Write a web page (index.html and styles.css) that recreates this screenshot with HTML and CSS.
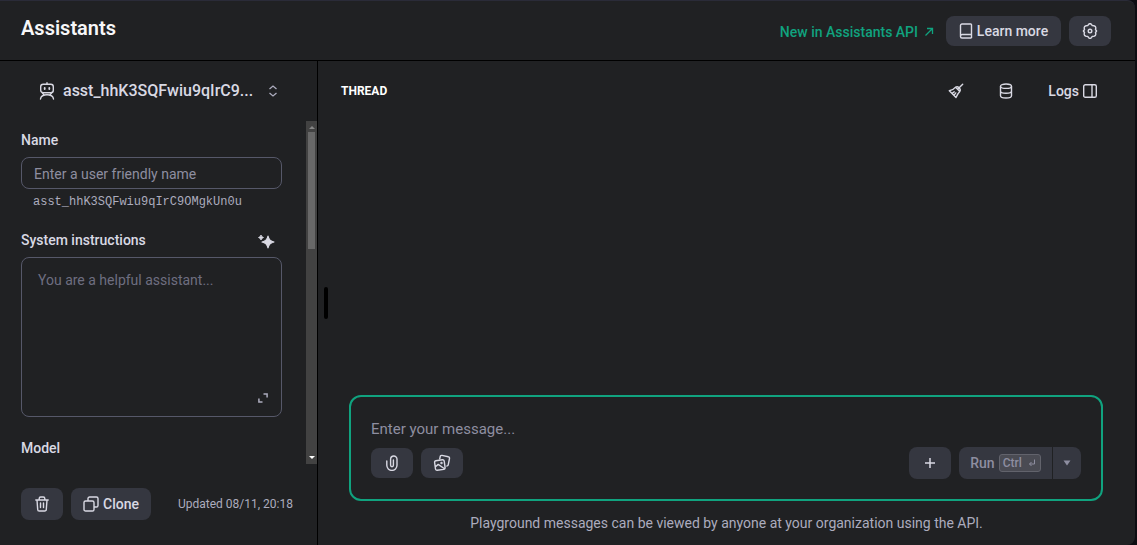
FILE: index.html
```
<!DOCTYPE html>
<html lang="en">
<head>
    <meta charset="UTF-8">
    <meta name="viewport" content="width=device-width, initial-scale=1.0">
    <title>Assistants - Playground</title>
    <link rel="stylesheet" href="styles.css">
</head>
<body>
    <div class="app">
        <header class="header">
            <h1>Assistants</h1>
            <div class="header-actions">
                <a href="#" class="news-link">New in Assistants API
                    <svg width="10" height="10" viewBox="0 0 10 10" fill="none" stroke="currentColor" stroke-width="1.3"><path d="M1.5 8.5 8.5 1.5M3 1.5h5.500v5.500"/></svg>
                </a>
                <button type="button" class="btn btn-learn">
                    <svg width="14" height="16" viewBox="0 0 14 16" fill="none" stroke="currentColor" stroke-width="1.4" stroke-linejoin="round"><path d="M12.5 11.5V1.8a.8.8 0 0 0-.8-.8H3a1.5 1.5 0 0 0-1.5 1.5v11A1.5 1.5 0 0 0 3 15h9.5M1.5 13.2A1.7 1.7 0 0 1 3.2 11.5h9.3V15"/></svg>
                    Learn more
                </button>
                <button type="button" class="btn btn-icon" aria-label="Settings">
                    <svg width="16" height="16" viewBox="0 0 16 16" fill="none" stroke="currentColor" stroke-width="1.4" stroke-linejoin="round"><path d="M6.7 1.3Q8 0 9.3 1.3L10.3 2.6 12 2.8Q14 3.2 13.8 5.1L13.5 6.5 14.6 8 13.5 9.5 13.8 10.9Q14 12.8 12 13.2L10.300 13.4 9.3 14.7Q8 16 6.7 14.7L5.7 13.4 4 13.2Q2 12.8 2.2 10.9L2.5 9.5 1.4 8 2.5 6.5 2.2 5.100Q2 3.2 4 2.8L5.7 2.6Z"/><circle cx="8" cy="8" r="1.8"/></svg>
                </button>
            </div>
        </header>

        <div class="content">
            <aside class="sidebar">
                <button type="button" class="assistant-select">
                    <svg width="16" height="18" viewBox="0 0 16 18" fill="none" stroke="currentColor" stroke-width="1.4" stroke-linecap="round"><rect x="1.7" y="2.2" width="12.6" height="8.6" rx="2.5"/><path d="M8 .8v1.4M1.5 17c.3-2.6 2.7-4.200 6.500-4.200s6.200 1.600 6.500 4.200M3.500 11l1.800 2.200M12.500 11l-1.800 2.200"/><path d="M5.700 6v1M10.300 6v1" stroke-width="1.800"/></svg>
                    <span class="assistant-name">asst_hhK3SQFwiu9qIrC9...</span>
                    <svg class="chevrons" width="10" height="12" viewBox="0 0 10 12" fill="none" stroke="currentColor" stroke-width="1.3"><path d="M1.5 4 5 1l3.5 3M1.5 8 5 11l3.5-3"/></svg>
                </button>

                <div class="sidebar-scroll">
                    <form class="settings">
                        <label for="name">Name</label>
                        <input type="text" id="name" placeholder="Enter a user friendly name">
                        <div class="assistant-id">asst_hhK3SQFwiu9qIrC9OMgkUn0u</div>

                        <div class="label-row">
                            <label for="instructions">System instructions</label>
                            <button type="button" class="btn-plain" aria-label="Generate">
                                <svg width="18" height="18" viewBox="0 0 18 18" fill="currentColor"><path d="M11 5Q12 10 17 11 12 12 11 17 10 12 5 11 10 10 11 5Z" stroke="currentColor" stroke-width="1.2" stroke-linejoin="round"/><path d="M4 4Q4.500 6 6.500 6.500 4.500 7 4 9 3.500 7 1.500 6.500 3.500 6 4 4Z" stroke="currentColor" stroke-width=".8"/></svg>
                            </button>
                        </div>
                        <div class="instructions-box">
                            <textarea id="instructions" placeholder="You are a helpful assistant..."></textarea>
                            <button type="button" class="btn-plain btn-expand" aria-label="Expand">
                                <svg width="10" height="10" viewBox="0 0 10 10" fill="none" stroke="currentColor" stroke-width="1.5"><path d="M5.5 .9h3.6v3.6M.9 5.5v3.6h3.6"/></svg>
                            </button>
                        </div>

                        <h2>Model</h2>
                    </form>
                    <div class="scrollbar">
                        <span class="arrow-up"></span>
                        <span class="thumb"></span>
                        <span class="arrow-down"></span>
                    </div>
                </div>

                <div class="sidebar-footer">
                    <button type="button" class="btn btn-icon" aria-label="Delete">
                        <svg width="16" height="16" viewBox="0 0 16 16" fill="none" stroke="currentColor" stroke-width="1.4" stroke-linecap="round" stroke-linejoin="round"><path d="M1.8 4h12.4M5.2 4V2.5A1.5 1.5 0 0 1 6.7 1h2.6a1.5 1.5 0 0 1 1.5 1.5V4M3 4l.7 9.4A1.6 1.6 0 0 0 5.3 15h5.4a1.6 1.6 0 0 0 1.6-1.6L13 4M6.5 7v4.5M9.5 7v4.5"/></svg>
                    </button>
                    <button type="button" class="btn btn-clone">
                        <svg width="16" height="16" viewBox="0 0 16 16" fill="none" stroke="currentColor" stroke-width="1.4" stroke-linejoin="round"><rect x="1" y="5" width="10" height="10" rx="1.6"/><path d="M5 5V2.6A1.6 1.6 0 0 1 6.6 1h6.8A1.6 1.6 0 0 1 15 2.6v6.8a1.6 1.6 0 0 1-1.6 1.6H11"/></svg>
                        Clone
                    </button>
                    <span class="updated">Updated 08/11, 20:18</span>
                </div>
            </aside>

            <main class="thread">
                <div class="drag-handle"></div>
                <div class="thread-header">
                    <h2>THREAD</h2>
                    <div class="thread-actions">
                        <button type="button" class="btn-plain" aria-label="Clear thread">
                            <svg width="16" height="16" viewBox="0 0 16 16" fill="none" stroke="currentColor" stroke-width="1.4" stroke-linecap="round" stroke-linejoin="round"><path d="M14.7 1.3 10.4 5.6M7.6 4.2 11.8 8.4M7.6 4.2C6 6.3 4 7.3 1.3 7.7L8 14.4C8.8 12.5 9.8 10.4 11.8 8.4Q13 6.6 11.2 4.9 9.4 3 7.6 4.2ZM4 10.3l2.2-1.500M6 12.300l1.800-2.400"/></svg>
                        </button>
                        <button type="button" class="btn-plain" aria-label="Storage">
                            <svg width="14" height="16" viewBox="0 0 14 16" fill="none" stroke="currentColor" stroke-width="1.4"><ellipse cx="7" cy="3.2" rx="5.5" ry="2.2"/><path d="M1.5 3.2v9.6C1.5 14 4 15 7 15s5.500-1 5.500-2.200V3.200M1.500 8c0 1.200 2.500 2.200 5.500 2.200s5.500-1 5.500-2.200"/></svg>
                        </button>
                        <button type="button" class="btn-plain">
                            Logs
                            <svg width="14" height="14" viewBox="0 0 14 14" fill="none" stroke="currentColor" stroke-width="1.4"><rect x=".7" y=".7" width="12.6" height="12.6" rx="1.6"/><path d="M9 1v12"/></svg>
                        </button>
                    </div>
                </div>

                <div class="composer">
                    <textarea rows="1" aria-label="Message" placeholder="Enter your message..."></textarea>
                    <div class="composer-actions">
                        <button type="button" class="btn btn-icon" aria-label="Attach file">
                            <svg width="14" height="16" viewBox="0 0 14 16" fill="none" stroke="currentColor" stroke-width="1.4" stroke-linecap="round"><path d="M1.8 6v4.300a5.100 5.100 0 0 0 10.200 0V4.200a3.200 3.200 0 0 0-6.400 0v6.100a1.400 1.400 0 0 0 2.800 0V5"/></svg>
                        </button>
                        <button type="button" class="btn btn-icon" aria-label="Attach image">
                            <svg width="18" height="18" viewBox="0 0 18 18" fill="none" stroke="currentColor" stroke-width="1.4" stroke-linejoin="round"><path d="M2.900 6.700l6.600-.9a1.500 1.500 0 0 1 1.700 1.300l.9 6.600a1.500 1.500 0 0 1-1.300 1.700l-6.600.9a1.500 1.500 0 0 1-1.700-1.300L1.600 8.400a1.500 1.500 0 0 1 1.300-1.700ZM2.200 13l3-2.600 6.300 4.400"/><circle cx="8.500" cy="9" r=".5"/><path d="M6.600 5.500 7.200 2.600a1.500 1.500 0 0 1 1.800-1.200l6.300 1.300a1.500 1.500 0 0 1 1.200 1.800l-1.300 6.300a1.500 1.500 0 0 1-1.800 1.200"/></svg>
                        </button>
                        <div class="run-actions">
                            <button type="button" class="btn btn-icon" aria-label="Add message">
                                <svg width="12" height="12" viewBox="0 0 12 12" fill="none" stroke="currentColor" stroke-width="1.5"><path d="M6 1v10M1 6h10"/></svg>
                            </button>
                            <div class="run-group">
                                <button type="button" class="btn btn-run">Run <kbd>Ctrl
                                    <svg width="8" height="8" viewBox="0 0 8 8" fill="none" stroke="currentColor"><path d="M6.5 .5v4.5H1.5M3.5 3l-2 2 2 2"/></svg></kbd></button>
                                <button type="button" class="btn btn-run-menu" aria-label="Run options">
                                    <svg width="8" height="6" viewBox="0 0 8 6" fill="currentColor"><path d="M.5 .5h7L4 5.5Z"/></svg>
                                </button>
                            </div>
                        </div>
                    </div>
                </div>
                <p class="notice">Playground messages can be viewed by anyone at your organization using the API.</p>
            </main>
        </div>
    </div>
</body>
</html>
```
FILE: styles.css
```
* {
    box-sizing: border-box;
}
body {
    margin: 0;
    background-color: #0d0d12;
    color: #d9d9e3;
    font-family: Roboto, "Liberation Sans", sans-serif;
    font-size: 14px;
    line-height: 20px;
}
button,
input,
textarea {
    font: inherit;
    color: inherit;
    margin: 0;
}
button {
    cursor: pointer;
}
svg {
    display: block;
    flex: none;
}
.app {
    display: flex;
    flex-direction: column;
    height: 100vh;
    margin-right: 2px;
    background-color: #202123;
    border-top: 1px solid #2a2b38;
    border-radius: 0 8px 8px 0;
    overflow: hidden;
}
.header {
    display: flex;
    align-items: center;
    justify-content: space-between;
    height: 60px;
    flex: none;
    padding: 0 24px 0 21px;
    border-bottom: 1px solid #000;
}
h1 {
    margin: 0 0 6px;
    font-size: 20px;
    font-weight: 600;
    line-height: 28px;
    color: #f7f7f8;
}
.header-actions {
    display: flex;
    align-items: center;
    gap: 8px;
}
.news-link {
    display: flex;
    align-items: center;
    gap: 6px;
    margin-right: 4px;
    padding-top: 2px;
    color: #10a37f;
    font-weight: 500;
    text-decoration: none;
}
.btn {
    display: flex;
    align-items: center;
    justify-content: center;
    gap: 4px;
    height: 32px;
    padding: 0 12px;
    border: none;
    border-radius: 8px;
    background-color: #353740;
    font-weight: 500;
}
.btn:hover {
    background-color: #40414f;
}
.header .btn,
.composer-actions > .btn {
    height: 30px;
}
.btn-icon {
    width: 42px;
    padding: 0;
}
.btn-learn {
    width: 115px;
}
.btn-clone {
    width: 80px;
}
.btn-plain {
    display: flex;
    align-items: center;
    gap: 4px;
    padding: 0;
    border: none;
    background: none;
    font-weight: 500;
}
.content {
    display: flex;
    flex: 1;
    min-height: 0;
}

/* sidebar */
.sidebar {
    display: flex;
    flex-direction: column;
    width: 318px;
    flex: none;
    border-right: 1px solid #000;
}
.assistant-select {
    display: flex;
    align-items: center;
    gap: 8px;
    height: 60px;
    flex: none;
    padding: 0 39px;
    border: none;
    background: none;
    text-align: left;
}
.assistant-name {
    flex: 1;
    font-size: 16px;
    font-weight: 500;
    white-space: nowrap;
}
.chevrons {
    color: #acacbe;
}
.sidebar-scroll {
    display: flex;
    flex: 1;
    min-height: 0;
}
.settings {
    flex: 1;
    min-width: 0;
    padding: 9px 24px 0 21px;
    overflow: hidden;
}
.settings label,
.settings h2 {
    display: block;
    margin: 0;
    font-size: 14px;
    font-weight: 500;
    line-height: 20px;
}
.settings input,
.settings textarea {
    display: block;
    width: 100%;
    border: 1px solid #565869;
    border-radius: 8px;
    background: none;
    outline: none;
}
.settings input {
    height: 32px;
    margin-top: 7px;
    padding: 2px 12px 0;
}
.settings textarea {
    height: 160px;
    padding: 12px 16px;
    resize: none;
}
::placeholder {
    color: #8e8ea0;
    opacity: 1;
}
.settings textarea::placeholder {
    color: #6e6e80;
}
.assistant-id {
    margin: 5px 0 20px;
    padding-left: 12px;
    color: #acacbe;
    font-family: "Liberation Mono", monospace;
    font-size: 12px;
    line-height: 16px;
}
.label-row {
    display: flex;
    align-items: center;
    justify-content: space-between;
    margin-bottom: 7px;
    padding-right: 7px;
}
.instructions-box {
    position: relative;
    margin-bottom: 21px;
}
.btn-expand {
    position: absolute;
    right: 14px;
    bottom: 14px;
    color: #acacbe;
}
.scrollbar {
    display: flex;
    flex-direction: column;
    align-items: center;
    width: 11px;
    background-color: #424242;
}
.arrow-up,
.arrow-down {
    border: 3px solid transparent;
}
.arrow-up {
    margin: 5px 0 3px;
    border-top-width: 0;
    border-bottom-color: #868686;
}
.thumb {
    width: 7px;
    height: 34%;
    background-color: #686868;
}
.arrow-down {
    margin: auto 0 5px;
    border-bottom-width: 0;
    border-top-color: #fff;
}
.sidebar-footer {
    display: flex;
    align-items: center;
    gap: 8px;
    height: 81px;
    flex: none;
    padding: 0 24px 2px 21px;
}
.updated {
    margin-left: auto;
    color: #acacbe;
    font-size: 12px;
}

/* thread */
.thread {
    position: relative;
    display: flex;
    flex-direction: column;
    flex: 1;
    min-width: 0;
}
.drag-handle {
    position: absolute;
    left: 6px;
    top: 226px;
    width: 4px;
    height: 32px;
    border-radius: 2px;
    background-color: #000;
}
.thread-header {
    display: flex;
    align-items: center;
    justify-content: space-between;
    height: 60px;
    padding: 0 38px 0 23px;
}
.thread-header h2 {
    margin: 0;
    color: #fff;
    font-size: 12px;
    font-weight: 700;
}
.thread-actions {
    display: flex;
    align-items: center;
    gap: 35px;
}
.composer {
    margin: auto 32px 12px 31px;
    padding: 20px;
    border: 2px solid #10a37f;
    border-radius: 12px;
}
.composer textarea {
    display: block;
    width: 100%;
    height: 24px;
    margin-bottom: 6px;
    padding: 0;
    border: none;
    outline: none;
    background: none;
    font-size: 15px;
    line-height: 24px;
    resize: none;
}
.composer-actions {
    display: flex;
    align-items: center;
    gap: 8px;
}
.run-actions {
    display: flex;
    gap: 8px;
    margin-left: auto;
}
.run-group {
    display: flex;
    gap: 1px;
}
.btn-run {
    width: 93px;
    border-radius: 8px 0 0 8px;
    color: #8e8ea0;
}
.btn-run-menu {
    width: 28px;
    padding: 0;
    border-radius: 0 8px 8px 0;
    color: #8e8ea0;
}
kbd {
    display: flex;
    align-items: center;
    gap: 6px;
    height: 18px;
    padding: 0 4px 0 3px;
    border: 1px solid #62636c;
    border-radius: 3px;
    background-color: #4a4b53;
    font-family: inherit;
    font-size: 12px;
}
.notice {
    margin: 0 0 12px;
    color: #acacbe;
    text-align: center;
}
```
